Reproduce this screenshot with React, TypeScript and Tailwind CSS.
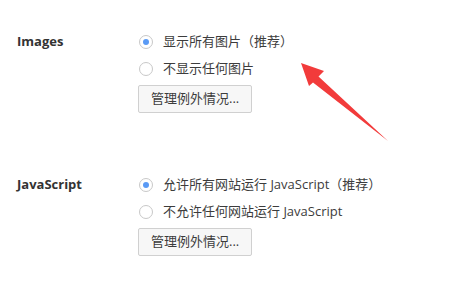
import React from "react";

type Option = { label: string; checked?: boolean };

const SECTIONS: Array<{ title: string; options: Option[] }> = [
  {
    title: "Images",
    options: [
      { label: "显示所有图片（推荐）", checked: true },
      { label: "不显示任何图片" },
    ],
  },
  {
    title: "JavaScript",
    options: [
      { label: "允许所有网站运行 JavaScript（推荐）", checked: true },
      { label: "不允许任何网站运行 JavaScript" },
    ],
  },
];

function Radio({ checked }: { checked?: boolean }) {
  return (
    <span className="flex h-[14px] w-[14px] shrink-0 items-center justify-center rounded-full border border-[#c8c8c8] bg-white">
      {checked && <span className="h-[6px] w-[6px] rounded-full bg-[#5a9af5]" />}
    </span>
  );
}

export default function App() {
  return (
    <main
      className="relative h-[288px] w-[457px] overflow-hidden bg-white text-[13px] text-[#3c3c3c]"
      style={{ fontFamily: '"Open Sans", "Noto Sans CJK SC", sans-serif' }}
    >
      <div className="flex flex-col gap-[58px] pt-[28px]">
        {SECTIONS.map((s) => (
          <section key={s.title} className="flex">
            <h2 className="flex h-[27px] w-[138px] shrink-0 items-center pl-[17px] text-[13px] font-bold text-[#333]">
              {s.title}
            </h2>
            <div className="flex flex-col">
              {s.options.map((o) => (
                <label key={o.label} className="flex h-[27px] items-center gap-[10px] pl-[1px]">
                  <Radio checked={o.checked} />
                  <span className="whitespace-nowrap">{o.label}</span>
                </label>
              ))}
              <button className="mt-[3px] h-[28px] w-[114px] rounded-[2px] border border-[#d0d0d0] bg-[#f7f7f7] pl-[12px] text-left text-[13px] text-[#3c3c3c]">
                管理例外情况...
              </button>
            </div>
          </section>
        ))}
      </div>

      <svg
        className="pointer-events-none absolute left-0 top-0"
        width="457"
        height="288"
        viewBox="0 0 457 288"
      >
        <polygon
          points="301,63 324,71 318.5,76.5 388,141 313,82.5 309,86"
          fill="#f23b3b"
        />
      </svg>
    </main>
  );
}
